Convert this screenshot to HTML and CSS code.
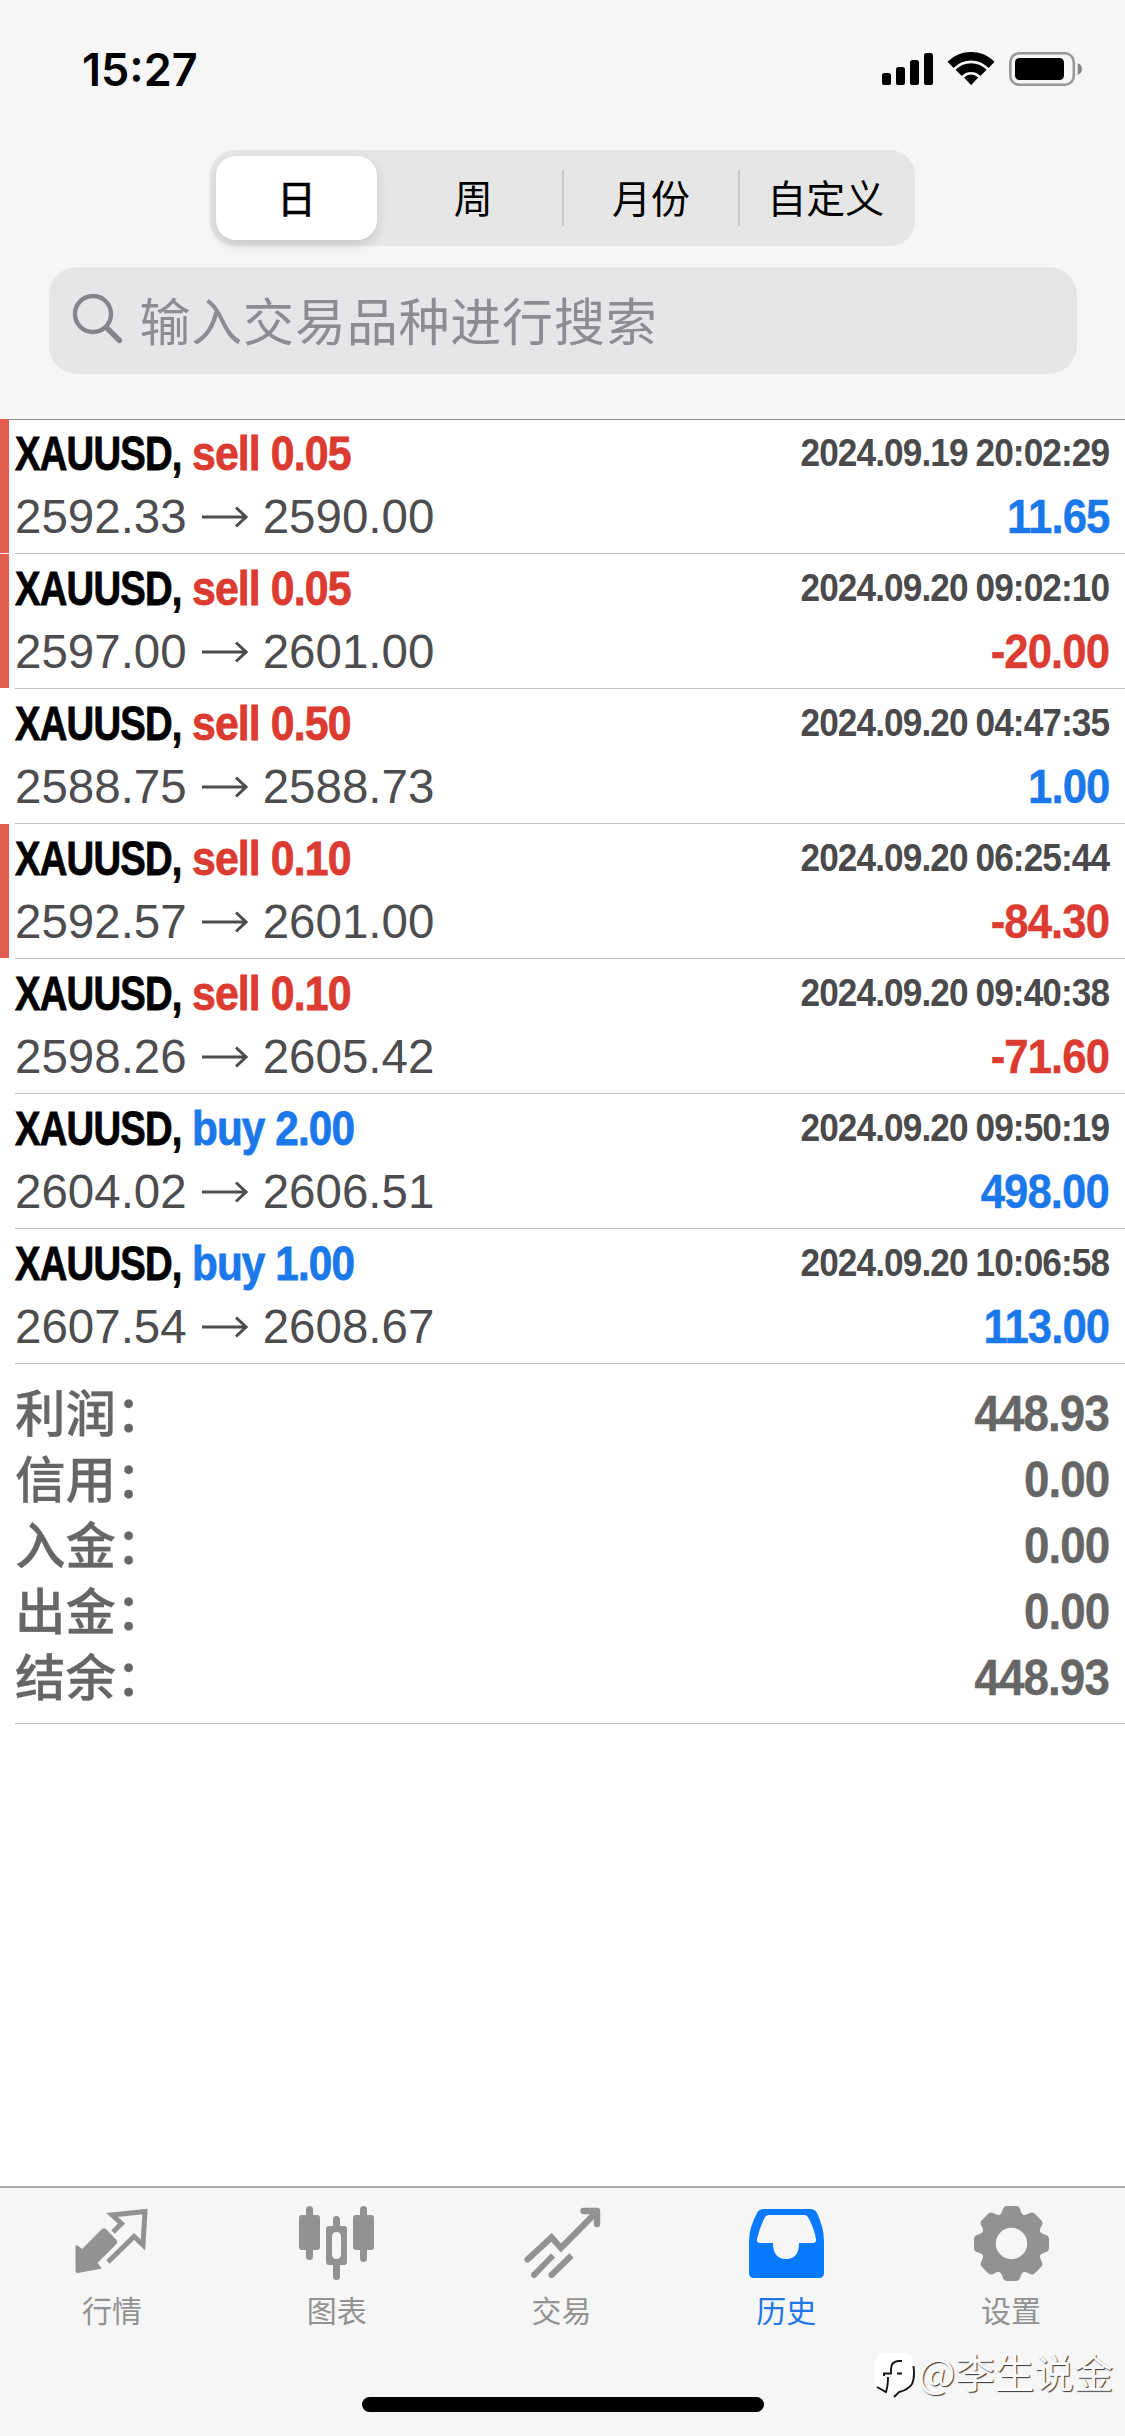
FILE: index.html
```html
<!DOCTYPE html>
<html lang="zh-CN">
<head>
<meta charset="utf-8">
<title>历史</title>
<link rel="stylesheet" href="styles.css">
</head>
<body>
<div class="screen">
  <header class="header">
    <div class="status">
      <span class="time">15:27</span>
      <svg class="status-icons" width="202" height="36" viewBox="0 0 202 36">
        <rect x="2" y="22" width="9" height="12" rx="2.6"/>
        <rect x="16" y="16" width="9" height="18" rx="2.6"/>
        <rect x="30" y="9" width="9" height="25" rx="2.6"/>
        <rect x="44" y="2" width="9" height="32" rx="2.6"/>
        <path d="M68.600 10.800a32.500 32.500 0 0 1 45 0l-5 5.200a25 25 0 0 0-35 0z" stroke="#000" stroke-width="1.400" stroke-linejoin="round"/>
        <path d="M76.600 18.800a21 21 0 0 1 29 0l-5.200 5.200a13.600 13.600 0 0 0-18.600 0z" stroke="#000" stroke-width="1.400" stroke-linejoin="round"/>
        <path d="M84.600 26.600a9.400 9.400 0 0 1 13 0l-6.500 7z" stroke="#000" stroke-width="1" stroke-linejoin="round"/>
        <rect x="130.300" y="2.300" width="63.500" height="31.400" rx="9" fill="none" stroke="#989898" stroke-width="2.600"/>
        <rect x="135" y="7" width="49" height="22" rx="4.500"/>
        <path d="M197.700 12q4.300 2.200 4.300 6t-4.300 6z" fill="#858585"/>
      </svg>
    </div>
    <div class="segments">
      <span class="segment selected">日</span>
      <span class="segment">周</span>
      <span class="segment divided">月份</span>
      <span class="segment divided">自定义</span>
    </div>
    <div class="search">
      <svg width="52" height="52" viewBox="0 0 52 52" fill="none" stroke="#858589" stroke-linecap="round">
        <circle cx="21" cy="20" r="18" stroke-width="4.400"/>
        <path d="M34.500 33.500l13 13" stroke-width="5.400"/>
      </svg>
      <span>输入交易品种进行搜索</span>
    </div>
  </header>
  <main class="content">
    <ul class="deals">
      <li class="deal flagged"><div class="line"><b class="symbol">XAUUSD,</b><b class="side sell">sell 0.05</b><span class="date">2024.09.19 20:02:29</span></div><div class="line"><span class="price">2592.33<svg class="arrow" viewBox="0 0 46 24"><path d="M0 12H44M34 2.500L44 12L34 21.500"/></svg>2590.00</span><b class="profit gain">11.65</b></div></li>
      <li class="deal flagged"><div class="line"><b class="symbol">XAUUSD,</b><b class="side sell">sell 0.05</b><span class="date">2024.09.20 09:02:10</span></div><div class="line"><span class="price">2597.00<svg class="arrow" viewBox="0 0 46 24"><path d="M0 12H44M34 2.500L44 12L34 21.500"/></svg>2601.00</span><b class="profit loss">-20.00</b></div></li>
      <li class="deal"><div class="line"><b class="symbol">XAUUSD,</b><b class="side sell">sell 0.50</b><span class="date">2024.09.20 04:47:35</span></div><div class="line"><span class="price">2588.75<svg class="arrow" viewBox="0 0 46 24"><path d="M0 12H44M34 2.500L44 12L34 21.500"/></svg>2588.73</span><b class="profit gain">1.00</b></div></li>
      <li class="deal flagged"><div class="line"><b class="symbol">XAUUSD,</b><b class="side sell">sell 0.10</b><span class="date">2024.09.20 06:25:44</span></div><div class="line"><span class="price">2592.57<svg class="arrow" viewBox="0 0 46 24"><path d="M0 12H44M34 2.500L44 12L34 21.500"/></svg>2601.00</span><b class="profit loss">-84.30</b></div></li>
      <li class="deal"><div class="line"><b class="symbol">XAUUSD,</b><b class="side sell">sell 0.10</b><span class="date">2024.09.20 09:40:38</span></div><div class="line"><span class="price">2598.26<svg class="arrow" viewBox="0 0 46 24"><path d="M0 12H44M34 2.500L44 12L34 21.500"/></svg>2605.42</span><b class="profit loss">-71.60</b></div></li>
      <li class="deal"><div class="line"><b class="symbol">XAUUSD,</b><b class="side buy">buy 2.00</b><span class="date">2024.09.20 09:50:19</span></div><div class="line"><span class="price">2604.02<svg class="arrow" viewBox="0 0 46 24"><path d="M0 12H44M34 2.500L44 12L34 21.500"/></svg>2606.51</span><b class="profit gain">498.00</b></div></li>
      <li class="deal"><div class="line"><b class="symbol">XAUUSD,</b><b class="side buy">buy 1.00</b><span class="date">2024.09.20 10:06:58</span></div><div class="line"><span class="price">2607.54<svg class="arrow" viewBox="0 0 46 24"><path d="M0 12H44M34 2.500L44 12L34 21.500"/></svg>2608.67</span><b class="profit gain">113.00</b></div></li>
    </ul>
    <dl class="summary">
      <div class="total"><dt>利润：</dt><dd>448.93</dd></div>
      <div class="total"><dt>信用：</dt><dd>0.00</dd></div>
      <div class="total"><dt>入金：</dt><dd>0.00</dd></div>
      <div class="total"><dt>出金：</dt><dd>0.00</dd></div>
      <div class="total"><dt>结余：</dt><dd>448.93</dd></div>
    </dl>
  </main>
  <nav class="tabs">
    <a class="tab"><svg viewBox="0 0 80 80"><path d="M34 23L44.500 34Q46 36 44.500 38L25.500 57L30 62.500L6 67Q3.500 67 3.500 64.500V40Q4 38.500 5.500 39.500L10 43L29 24Q31.500 21 34 23Z" fill="#929292"/><path d="M41 26L49.500 17.500L40 9L73 5.500L71 39L62 30.500L36 56" fill="none" stroke="#929292" stroke-width="5"/></svg><span>行情</span></a>
    <a class="tab"><svg viewBox="0 0 80 80" fill="#929292"><rect x="2" y="9" width="21" height="35" rx="3"/><rect x="9" y="0" width="7" height="54" rx="3.500"/><rect x="56" y="9" width="21" height="35" rx="3"/><rect x="63" y="0" width="7" height="56" rx="3.500"/><path fill-rule="evenodd" d="M32 20H47Q50 20 50 23V56Q50 59 47 59H32Q29 59 29 56V23Q29 20 32 20ZM39.500 26Q35 26 35 31V48Q35 53 39.500 53Q44 53 44 48V31Q44 26 39.500 26Z"/><rect x="36" y="10" width="7" height="12" rx="3.500"/><rect x="36" y="56" width="7" height="18" rx="3.500"/></svg><span>图表</span></a>
    <a class="tab"><svg viewBox="0 0 80 80" fill="none" stroke="#929292" stroke-width="6"><path d="M5.500 53.500L29.500 31.500L39 42L74 6.500" stroke-width="6.200" stroke-linejoin="miter" stroke-linecap="round"/><path d="M61.500 5H75V18" stroke-linecap="round" stroke-linejoin="round" stroke-width="6.400"/><path d="M31 49.500L12 69M49.500 49.500L29.500 69"/><circle cx="12" cy="69" r="1.500" stroke-width="3"/><circle cx="29.500" cy="69" r="1.500" stroke-width="3"/></svg><span>交易</span></a>
    <a class="tab active"><svg viewBox="0 0 80 80"><path fill="#087aff" fill-rule="evenodd" d="M17 3H63Q68 3 70 7Q77 22 77 35V67Q77 72 72 72H7Q2 72 2 67V35Q2 22 10 7Q12 3 17 3ZM22 9Q19 9 17.500 12Q12.500 22 10 33Q9.500 37 13 37H26Q26 53 39 53Q52 53 52 37H66Q69.500 37 69 33Q67 22 61.500 12Q60 9 57 9Z"/></svg><span>历史</span></a>
    <a class="tab"><svg viewBox="0 0 80 80"><g fill="#929292"><circle cx="39.500" cy="37.500" r="31"/><g id="teeth"><path id="tooth" d="M35 0H44Q47 0 48 3Q49.500 9 54 11L39.500 21L25 11Q29.500 9 31 3Q32 0 35 0Z"/><use href="#tooth" transform="rotate(45 39.500 37.500)"/><use href="#tooth" transform="rotate(90 39.500 37.500)"/><use href="#tooth" transform="rotate(135 39.500 37.500)"/></g><use href="#teeth" transform="rotate(180 39.500 37.500)"/></g><circle cx="39.500" cy="37.500" r="15.700" fill="#f6f6f6"/></svg><span>设置</span></a>
  </nav>
  <div class="home"></div>
  <div class="watermark">
    <svg width="40" height="46" viewBox="0 0 40 46"><path d="M11 1H29Q38 1 38.500 11V25Q38 37 21 41L1 36Q0 32 0 25V11Q1 1 11 1Z" fill="#fff"/><path d="M27 9H23Q16 10 16 17V21.500H9V24M22 21.500H27M13 25Q13 34 11 40L2 35M38.500 14Q40 26 37 32Q33 38 24 40L19 45" fill="none" stroke="#151515" stroke-width="1.900"/></svg>
    <span class="handle">@李生说金</span>
  </div>
</div>
</body>
</html>
```
FILE: styles.css
```css
* { box-sizing: border-box; margin: 0; padding: 0; }
body { background: #fff; font-family: "Liberation Sans", "Noto Sans CJK SC", sans-serif; }
.screen { position: relative; display: flex; flex-direction: column; width: 1125px; height: 2436px; overflow: hidden; }

.header { height: 420px; background: #f6f6f6; border-bottom: 1px solid #8e8e91; }
.status { display: flex; justify-content: space-between; align-items: center; height: 150px; padding: 0 43px 12px 82px; }
.time { font: 600 45px "Inter", sans-serif; }
.segments { display: flex; width: 705px; height: 96px; margin-left: 210px; padding: 6px 0 6px 6px; border-radius: 25px; background: #e6e6e6; font: 400 39px "Noto Sans CJK SC", sans-serif; }
.segment { display: flex; align-items: center; justify-content: center; width: 178px; height: 84px; padding-bottom: 5px; line-height: 78px; }
.selected { width: 162px; margin-right: 8px; border-radius: 20px; background: #fff; box-shadow: 0 5px 12px rgba(0,0,0,.13); -webkit-text-stroke: .7px #000; }
.divided { padding-left: 2px; background: linear-gradient(#c9c9cb, #c9c9cb) 0 14px / 2px 56px no-repeat; }
.divided:last-child { padding: 0 2px 5px 0; }
.search { display: flex; align-items: center; gap: 16px; width: 1028px; height: 107px; margin: 21px 0 0 48.5px; padding: 0 0 2px 23px; border-radius: 28px; background: #e6e6e8; color: #8d8d91; font: 51px/105px "Noto Sans CJK SC", sans-serif; letter-spacing: .8px; }

.content { flex: 1; }
.deals { list-style: none; }
.deal { position: relative; height: 135px; padding: 2px 16px 0 15px; background: linear-gradient(#c0c0c3, #c0c0c3) 15px 133px / 1110px 1px no-repeat; }
.flagged::before { content: ""; position: absolute; left: 0; top: -1px; width: 9px; height: 134px; background: #e25d4f; }
.line { display: flex; justify-content: space-between; height: 63px; line-height: 63px; white-space: nowrap; }
.symbol, .side { font-size: 48px; letter-spacing: -1px; transform-origin: left; -webkit-text-stroke: .8px currentColor; }
.symbol { width: 177px; transform: scaleX(.797); }
.side { width: 157px; transform: scaleX(.892); }
.side.buy { transform: scaleX(.88); }
.sell, .loss { color: #db3b30; }
.buy, .gain { color: #1a78ea; }
.date { margin-left: auto; font-size: 39px; font-weight: 700; line-height: 61px; letter-spacing: -1px; word-spacing: -1px; color: #4a4a4c; transform: scaleX(.902); transform-origin: right; }
.price { display: flex; align-items: center; font-size: 47.500px; color: #4d4d4f; }
.arrow { width: 46px; height: 24px; margin: 0 15px; fill: none; stroke: #4d4d4f; stroke-width: 3; }
.profit { font-size: 48px; letter-spacing: -1px; transform: scaleX(.91); transform-origin: right; -webkit-text-stroke: .4px currentColor; }
.summary { height: 359px; margin-left: 15px; padding: 16px 16px 0 0; border-bottom: 1px solid #c0c0c3; color: #666; }
.total { display: flex; justify-content: space-between; height: 66px; line-height: 66px; }
.total dt { font-size: 50.5px; font-weight: 500; line-height: 67px; -webkit-text-stroke: .3px #666; }
.total dd { font-size: 50px; font-weight: 700; letter-spacing: -1px; transform: scaleX(.915); transform-origin: right; -webkit-text-stroke: .4px currentColor; }

.tabs { display: flex; height: 250px; padding: 18px 1px 0 0; background: #f6f6f6; border-top: 2px solid #adadad; }
.tab { display: flex; flex-direction: column; align-items: center; gap: 1px; flex: 1; color: #929292; font: 400 30px/44px "Noto Sans CJK SC", sans-serif; }
.tab svg { width: 80px; height: 80px; overflow: visible; }
.tab span { padding-right: 1px; }
.active { color: #2176e8; }
.home { position: absolute; left: 362px; top: 2397px; width: 402px; height: 15px; border-radius: 8px; background: #000; }
.watermark { position: absolute; left: 875px; top: 2352px; display: flex; align-items: flex-start; gap: 3px; }
.handle { color: #fafafa; font: 400 39.5px/38px "Noto Sans CJK SC", sans-serif; white-space: nowrap; text-shadow: 1px 1px 1px #333; }
```
